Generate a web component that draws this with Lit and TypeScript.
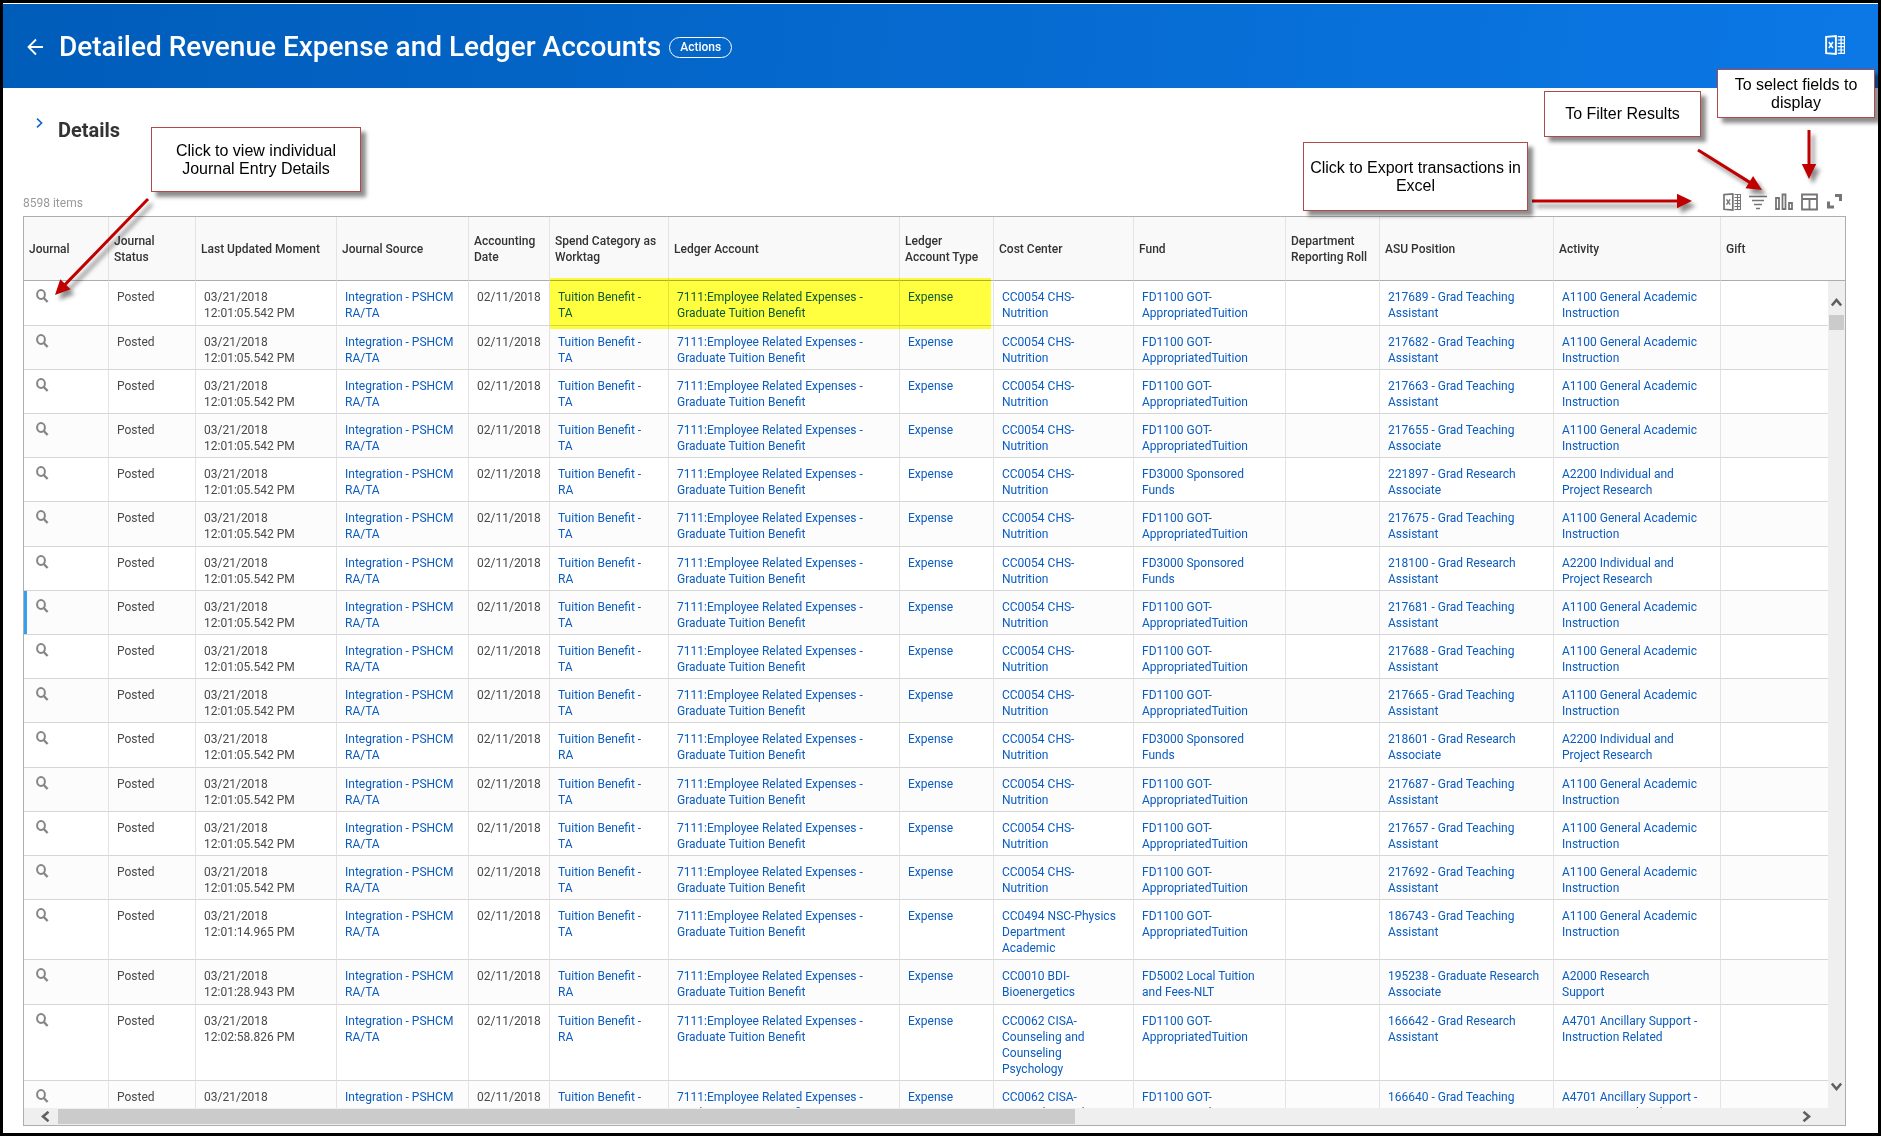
import { LitElement, html, css, svg } from "lit";
import { customElement } from "lit/decorators.js";
import { classMap } from "lit/directives/class-map.js";

interface Entry {
  moment: string;
  spend: string;
  center: string;
  fund: string;
  position: string;
  activity: string;
  active?: boolean;
}

const COLUMNS: { label: string; width: number | null }[] = [
  { label: "Journal", width: 85 },
  { label: "Journal\nStatus", width: 87 },
  { label: "Last Updated Moment", width: 141 },
  { label: "Journal Source", width: 132 },
  { label: "Accounting\nDate", width: 81 },
  { label: "Spend Category as\nWorktag", width: 119 },
  { label: "Ledger Account", width: 231 },
  { label: "Ledger\nAccount Type", width: 94 },
  { label: "Cost Center", width: 140 },
  { label: "Fund", width: 152 },
  { label: "Department\nReporting Roll", width: 94 },
  { label: "ASU Position", width: 174 },
  { label: "Activity", width: 167 },
  { label: "Gift", width: null },
];

const NUTRITION = "CC0054 CHS-\nNutrition";
const GOT = "FD1100 GOT-\nAppropriatedTuition";
const SPONSORED = "FD3000 Sponsored\nFunds";
const GENERAL = "A1100 General Academic\nInstruction";
const PROJECT = "A2200 Individual and\nProject Research";
const ANCILLARY = "A4701 Ancillary Support -\nInstruction Related";

const teaching = (position: string): Entry => ({
  moment: "12:01:05.542 PM",
  spend: "TA",
  center: NUTRITION,
  fund: GOT,
  position,
  activity: GENERAL,
});

const research = (position: string): Entry => ({
  moment: "12:01:05.542 PM",
  spend: "RA",
  center: NUTRITION,
  fund: SPONSORED,
  position,
  activity: PROJECT,
});

const ENTRIES: Entry[] = [
  teaching("217689 - Grad Teaching\nAssistant"),
  teaching("217682 - Grad Teaching\nAssistant"),
  teaching("217663 - Grad Teaching\nAssistant"),
  teaching("217655 - Grad Teaching\nAssociate"),
  research("221897 - Grad Research\nAssociate"),
  teaching("217675 - Grad Teaching\nAssistant"),
  research("218100 - Grad Research\nAssistant"),
  { ...teaching("217681 - Grad Teaching\nAssistant"), active: true },
  teaching("217688 - Grad Teaching\nAssistant"),
  teaching("217665 - Grad Teaching\nAssistant"),
  research("218601 - Grad Research\nAssociate"),
  teaching("217687 - Grad Teaching\nAssistant"),
  teaching("217657 - Grad Teaching\nAssistant"),
  teaching("217692 - Grad Teaching\nAssistant"),
  {
    ...teaching("186743 - Grad Teaching\nAssistant"),
    moment: "12:01:14.965 PM",
    center: "CC0494 NSC-Physics\nDepartment\nAcademic",
  },
  {
    moment: "12:01:28.943 PM",
    spend: "RA",
    center: "CC0010 BDI-\nBioenergetics",
    fund: "FD5002 Local Tuition\nand Fees-NLT",
    position: "195238 - Graduate Research\nAssociate",
    activity: "A2000 Research\nSupport",
  },
  {
    moment: "12:02:58.826 PM",
    spend: "RA",
    center: "CC0062 CISA-\nCounseling and\nCounseling\nPsychology",
    fund: GOT,
    position: "166642 - Grad Research\nAssistant",
    activity: ANCILLARY,
  },
  {
    moment: "12:02:58.826 PM",
    spend: "TA",
    center: "CC0062 CISA-\nCounseling and\nCounseling\nPsychology",
    fund: GOT,
    position: "166640 - Grad Teaching\nAssistant",
    activity: ANCILLARY,
  },
];

const excelIcon = (size: number) => html`
  <svg width=${size} height=${size} viewBox="0 0 18 18" fill="none" stroke="currentColor" aria-hidden="true">
    <path d="M1 1.7 9.8 1v16L1 16.3z" stroke-width="1.7" />
    <path d="m3.500 6.300 3.600 5.400M7.100 6.300l-3.600 5.400" stroke-width="1.400" />
    <path d="M11.500 1.500h6v15h-6M11.500 4.500h6M11.500 7.500h6M11.500 10.500h6M11.500 13.500h6M14.500 1.500v15" stroke-width="1.100" />
  </svg>
`;

@customElement("app-root")
export class AppRoot extends LitElement {
  static styles = css`
    :host {
      display: block;
      font-family: Roboto, "Liberation Sans", sans-serif;
      font-size: 12px;
      line-height: 16px;
      color: #494949;
    }
    * {
      box-sizing: border-box;
    }
    button {
      display: flex;
      align-items: center;
      justify-content: center;
      padding: 0;
      border: 0;
      background: none;
      color: inherit;
      font: inherit;
      cursor: pointer;
    }
    svg {
      display: block;
    }
    .frame {
      position: relative;
      display: flex;
      flex-direction: column;
      height: 100vh;
      border: 3px solid #000;
      background: #fff;
      overflow: hidden;
    }
    .banner {
      display: flex;
      align-items: center;
      flex: none;
      height: 84px;
      margin-top: 1px;
      padding: 2px 33px 0 24px;
      background: linear-gradient(97deg, #005cb9, #0b78e6);
      color: #fff;
    }
    .title {
      margin: 0 8px 0 15px;
      font-size: 28px;
      line-height: 32px;
      font-weight: 500;
    }
    .actions {
      height: 21px;
      padding: 0 10px;
      border: 1px solid #fff;
      border-radius: 11px;
      font-size: 12px;
      font-weight: 500;
    }
    .banner-export {
      margin: 0 0 4px auto;
    }
    .details {
      display: flex;
      align-items: flex-start;
      gap: 15px;
      flex: none;
      padding: 30px 33px 0;
    }
    .chevron {
      color: #0a66c8;
    }
    .details-title {
      margin: 0;
      font-size: 20px;
      line-height: 24px;
      font-weight: 700;
      color: #333;
    }
    .bar {
      display: flex;
      align-items: flex-end;
      justify-content: space-between;
      flex: 0 0 74px;
      padding: 0 36px 5px 20px;
    }
    .count {
      font-size: 12px;
      color: #999;
    }
    .tools {
      display: flex;
      align-items: center;
      gap: 8px;
      color: #757575;
    }
    .grid {
      position: relative;
      display: flex;
      flex-direction: column;
      flex: 1;
      min-height: 0;
      margin: 0 32px 7px 20px;
      border: 1px solid #adadad;
    }
    .viewport {
      flex: 1;
      min-height: 0;
      overflow: hidden;
    }
    table {
      width: 100%;
      table-layout: fixed;
      border-collapse: separate;
      border-spacing: 0;
      white-space: pre;
    }
    th {
      height: 64px;
      padding: 0 0 0 5px;
      border-right: 1px solid #e3e3e3;
      border-bottom: 1px solid #adadad;
      background: #f9f9f9;
      color: #333;
      font-weight: 500;
      text-align: left;
    }
    td {
      padding: 8px 0 3px 8px;
      border-right: 1px solid #e3e3e3;
      border-bottom: 1px solid #d6d6d6;
      vertical-align: top;
    }
    td:first-child {
      white-space: normal;
    }
    th:last-child,
    td:last-child {
      border-right: 0;
    }
    .row:nth-child(even) {
      background: #fcfcfc;
    }
    .row:nth-child(5n + 1) td {
      padding-bottom: 4px;
    }
    .row.active td:first-child {
      box-shadow: inset 3px 0 #35a0f2;
    }
    .inspect {
      margin-left: 4px;
      color: #858585;
    }
    a {
      color: #0b5cc0;
      text-decoration: none;
    }
    .highlight {
      position: absolute;
      top: 61px;
      left: 526px;
      width: 441px;
      height: 51px;
      background: #ffff3f;
      mix-blend-mode: multiply;
      pointer-events: none;
    }
    .vscroll {
      position: absolute;
      top: 64px;
      right: 0;
      bottom: 17px;
      display: flex;
      flex-direction: column;
      align-items: center;
      width: 17px;
      padding: 17px 0;
      background: #efefef;
      color: #606060;
    }
    .vthumb {
      width: 15px;
      height: 15px;
      margin: 8px 0 auto;
      background: #cbcbcb;
    }
    .hscroll {
      display: flex;
      align-items: center;
      flex: 0 0 17px;
      padding: 0 34px 0 17px;
      background: #efefef;
      color: #606060;
    }
    .htrack {
      flex: 1;
      margin: 0 0 0 8px;
    }
    .hthumb {
      width: calc(100% * 7 / 12);
      height: 15px;
      background: #cbcbcb;
    }
    .callout {
      position: absolute;
      display: flex;
      align-items: center;
      justify-content: center;
      border: 1px solid #b04a4a;
      background: #fff;
      box-shadow: 5px 5px 4px rgba(0, 0, 0, 0.45);
      color: #000;
      font-family: "Liberation Sans", Arial, sans-serif;
      font-size: 16px;
      line-height: 18px;
      text-align: center;
      white-space: pre;
    }
    .entry-note {
      top: 124px;
      left: 148px;
      width: 210px;
      height: 65px;
    }
    .export-note {
      top: 139px;
      right: 350px;
      width: 225px;
      height: 69px;
    }
    .filter-note {
      top: 88px;
      right: 177px;
      width: 157px;
      height: 46px;
    }
    .fields-note {
      top: 66px;
      right: 3px;
      width: 158px;
      height: 49px;
    }
    .arrows {
      position: absolute;
      top: 0;
      overflow: visible;
      pointer-events: none;
      filter: drop-shadow(4px 5px 2px rgba(0, 0, 0, 0.45));
    }
    .arrows-left {
      left: 0;
    }
    .arrows-right {
      right: 0;
    }
  `;

  private arrow(x1: number, y1: number, x2: number, y2: number) {
    const length = Math.hypot(x2 - x1, y2 - y1);
    const angle = (Math.atan2(y2 - y1, x2 - x1) * 180) / Math.PI;
    return svg`
      <g transform="translate(${x2} ${y2}) rotate(${angle})" fill="#c00000">
        <path d="M${-length} -1.5H-13v3H${-length}z" />
        <path d="M0 0-15 7.2v-14.4z" />
      </g>
    `;
  }

  private link(text: string) {
    return html`<a href="#">${text}</a>`;
  }

  private row(e: Entry) {
    return html`
      <tr class=${classMap({ row: true, active: !!e.active })}>
        <td>
          <button class="inspect" aria-label="View journal">
            <svg width="13" height="14" viewBox="0 0 13 14" fill="none" stroke="currentColor" aria-hidden="true">
              <ellipse cx="5" cy="5.5" rx="3.9" ry="4.4" stroke-width="2" />
              <path d="m7.8 9 3.8 4" stroke-width="2.4" />
            </svg>
          </button>
        </td>
        <td>Posted</td>
        <td>${"03/21/2018\n" + e.moment}</td>
        <td>${this.link("Integration - PSHCM\nRA/TA")}</td>
        <td>02/11/2018</td>
        <td>${this.link("Tuition Benefit -\n" + e.spend)}</td>
        <td>${this.link("7111:Employee Related Expenses -\nGraduate Tuition Benefit")}</td>
        <td>${this.link("Expense")}</td>
        <td>${this.link(e.center)}</td>
        <td>${this.link(e.fund)}</td>
        <td></td>
        <td>${this.link(e.position)}</td>
        <td>${this.link(e.activity)}</td>
        <td></td>
      </tr>
    `;
  }

  render() {
    return html`
      <main class="frame">
        <header class="banner">
          <button aria-label="Back">
            <svg width="17" height="18" viewBox="0 0 17 18" fill="none" stroke="currentColor" stroke-width="1.8" aria-hidden="true">
              <path d="M16 9H1.5M9 1.5 1.5 9 9 16.5" />
            </svg>
          </button>
          <h1 class="title">Detailed Revenue Expense and Ledger Accounts</h1>
          <button class="actions">Actions</button>
          <button class="banner-export" aria-label="Export to Excel">${excelIcon(20)}</button>
        </header>

        <section class="details">
          <button class="chevron" aria-label="Expand details">
            <svg width="7" height="10" viewBox="0 0 7 10" fill="none" stroke="currentColor" stroke-width="1.6" aria-hidden="true">
              <path d="m1 .6 4.6 4.4L1 9.4" />
            </svg>
          </button>
          <h2 class="details-title">Details</h2>
        </section>

        <div class="bar">
          <span class="count">8598 items</span>
          <div class="tools">
            <button aria-label="Export to Excel">${excelIcon(18)}</button>
            <button aria-label="Filter">
              <svg width="18" height="18" viewBox="0 0 18 18" stroke="currentColor" stroke-width="1.7" aria-hidden="true">
                <path d="M0 3.5h18M3 7.5h12M5 11.5h8M7 15.5h4" />
              </svg>
            </button>
            <button aria-label="Chart">
              <svg width="18" height="18" viewBox="0 0 18 18" fill="none" stroke="currentColor" stroke-width="1.8" aria-hidden="true">
                <path d="M1 5h3v11H1zM7.5 1.5h3V16h-3zM14 10h3v6h-3z" />
              </svg>
            </button>
            <button aria-label="Select columns">
              <svg width="17" height="18" viewBox="0 0 17 18" fill="none" stroke="currentColor" stroke-width="1.8" aria-hidden="true">
                <path d="M1 1.5h15v15H1zM1 6h15M8.5 6v10.5" />
              </svg>
            </button>
            <button aria-label="Full screen">
              <svg width="16" height="18" viewBox="0 0 16 18" fill="none" stroke="currentColor" stroke-width="3" aria-hidden="true">
                <path d="M9 2.5h5.5V8M2.500 8.500V14H8" />
              </svg>
            </button>
          </div>
        </div>

        <section class="grid">
          <div class="viewport">
            <table>
              <colgroup>
                ${COLUMNS.map((c) => html`<col width=${c.width ?? "auto"} />`)}
              </colgroup>
              <thead>
                <tr>
                  ${COLUMNS.map((c) => html`<th scope="col">${c.label}</th>`)}
                </tr>
              </thead>
              <tbody>
                ${ENTRIES.map((e) => this.row(e))}
              </tbody>
            </table>
          </div>
          <div class="highlight"></div>
          <div class="vscroll">
            <button aria-label="Scroll up">
              <svg width="11" height="9" viewBox="0 0 11 9" fill="none" stroke="currentColor" stroke-width="2.6" aria-hidden="true">
                <path d="m.8 7.5 4.7-5.500 4.700 5.500" />
              </svg>
            </button>
            <div class="vthumb"></div>
            <button aria-label="Scroll down">
              <svg width="11" height="9" viewBox="0 0 11 9" fill="none" stroke="currentColor" stroke-width="2.6" aria-hidden="true">
                <path d="m.8 1.500 4.700 5.500 4.700-5.500" />
              </svg>
            </button>
          </div>
          <div class="hscroll">
            <button aria-label="Scroll left">
              <svg width="9" height="11" viewBox="0 0 9 11" fill="none" stroke="currentColor" stroke-width="2.6" aria-hidden="true">
                <path d="M7.500.8 2 5.500l5.500 4.700" />
              </svg>
            </button>
            <div class="htrack"><div class="hthumb"></div></div>
            <button aria-label="Scroll right">
              <svg width="9" height="11" viewBox="0 0 9 11" fill="none" stroke="currentColor" stroke-width="2.6" aria-hidden="true">
                <path d="M1.500.8 7 5.500l-5.500 4.700" />
              </svg>
            </button>
          </div>
        </section>

        <svg class="arrows arrows-left" width="160" height="300" aria-hidden="true">
          ${this.arrow(145, 196, 52, 292)}
        </svg>
        <svg class="arrows arrows-right" width="375" height="200" aria-hidden="true">
          ${this.arrow(29, 198, 189, 198)}
          ${this.arrow(195, 147, 259, 187)}
          ${this.arrow(306, 127, 306, 176)}
        </svg>
        <div class="callout entry-note">Click to view individual
Journal Entry Details</div>
        <div class="callout export-note">Click to Export transactions in
Excel</div>
        <div class="callout filter-note">To Filter Results</div>
        <div class="callout fields-note">To select fields to
display</div>
      </main>
    `;
  }
}
